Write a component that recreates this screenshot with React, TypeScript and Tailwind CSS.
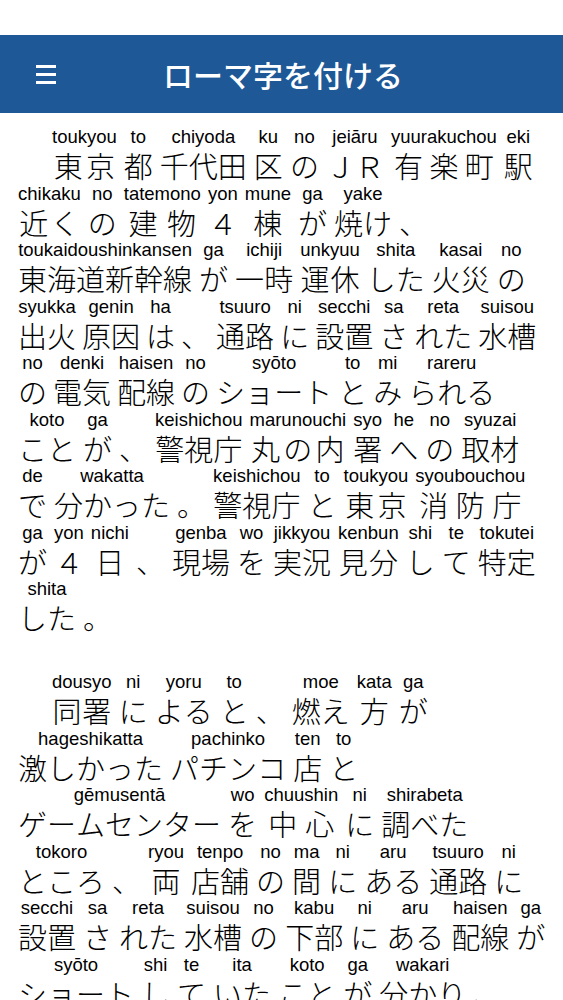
import React from "react";

type U = [string, string];
type Line = { gap?: string; units: U[] };

const P1: Line[] = [
  { units: [["東京", "toukyou"], ["都", "to"], ["千代田", "chiyoda"], ["区", "ku"], ["の", "no"], ["ＪＲ", "jeiāru"], ["有楽町", "yuurakuchou"], ["駅", "eki"]] },
  { units: [["近く", "chikaku"], ["の", "no"], ["建物", "tatemono"], ["４", "yon"], ["棟", "mune"], ["が", "ga"], ["焼け", "yake"], ["、", ""]] },
  { units: [["東海道新幹線", "toukaidoushinkansen"], ["が", "ga"], ["一時", "ichiji"], ["運休", "unkyuu"], ["した", "shita"], ["火災", "kasai"], ["の", "no"]] },
  { gap: "gap-x-[6px]", units: [["出火", "syukka"], ["原因", "genin"], ["は", "ha"], ["、", ""], ["通路", "tsuuro"], ["に", "ni"], ["設置", "secchi"], ["さ", "sa"], ["れた", "reta"], ["水槽", "suisou"]] },
  { gap: "gap-x-[6px]", units: [["の", "no"], ["電気", "denki"], ["配線", "haisen"], ["の", "no"], ["ショート", "syōto"], ["と", "to"], ["み", "mi"], ["られる", "rareru"]] },
  { units: [["こと", "koto"], ["が", "ga"], ["、", ""], ["警視庁", "keishichou"], ["丸の内", "marunouchi"], ["署", "syo"], ["へ", "he"], ["の", "no"], ["取材", "syuzai"]] },
  { units: [["で", "de"], ["分かった", "wakatta"], ["。", ""], ["警視庁", "keishichou"], ["と", "to"], ["東京", "toukyou"], ["消防庁", "syoubouchou"]] },
  { units: [["が", "ga"], ["４", "yon"], ["日", "nichi"], ["、", ""], ["現場", "genba"], ["を", "wo"], ["実況", "jikkyou"], ["見分", "kenbun"], ["し", "shi"], ["て", "te"], ["特定", "tokutei"]] },
  { units: [["した", "shita"], ["。", ""]] },
];

const P2: Line[] = [
  { units: [["同署", "dousyo"], ["に", "ni"], ["よる", "yoru"], ["と", "to"], ["、", ""], ["燃え", "moe"], ["方", "kata"], ["が", "ga"]] },
  { units: [["激しかった", "hageshikatta"], ["パチンコ", "pachinko"], ["店", "ten"], ["と", "to"]] },
  { units: [["ゲームセンター", "gēmusentā"], ["を", "wo"], ["中心", "chuushin"], ["に", "ni"], ["調べた", "shirabeta"]] },
  { units: [["ところ", "tokoro"], ["、", ""], ["両", "ryou"], ["店舗", "tenpo"], ["の", "no"], ["間", "ma"], ["に", "ni"], ["ある", "aru"], ["通路", "tsuuro"], ["に", "ni"]] },
  { units: [["設置", "secchi"], ["さ", "sa"], ["れた", "reta"], ["水槽", "suisou"], ["の", "no"], ["下部", "kabu"], ["に", "ni"], ["ある", "aru"], ["配線", "haisen"], ["が", "ga"]] },
  { units: [["ショート", "syōto"], ["し", "shi"], ["て", "te"], ["いた", "ita"], ["こと", "koto"], ["が", "ga"], ["分かり", "wakari"], ["、", ""]] },
];

function Unit({ base, rt }: { base: string; rt: string }) {
  return (
    <div className="flex flex-col">
      <div className="text-center whitespace-nowrap text-[18.5px] leading-[20px] font-['Liberation_Sans',Arial,sans-serif]">
        {rt || "\u00a0"}
      </div>
      <div className="flex justify-around text-[29px] leading-[36.5px] font-light">
        {Array.from(base).map((c, i) => (
          <span key={i}>{c}</span>
        ))}
      </div>
    </div>
  );
}

function Paragraph({ lines }: { lines: Line[] }) {
  return (
    <div className="flex flex-col">
      {lines.map((line, i) => (
        <div key={i} className={`flex ${line.gap ?? "gap-x-[7px]"} ${i === 0 ? "pl-[34px]" : ""}`}>
          {line.units.map(([b, r], j) => (
            <Unit key={j} base={b} rt={r} />
          ))}
        </div>
      ))}
    </div>
  );
}

export default function App() {
  return (
    <div className="min-h-screen bg-white text-black font-['Noto_Sans_CJK_JP',sans-serif]">
      <div className="h-[35px] bg-white" />
      <header className="h-[78px] bg-[#1e5896] flex items-center">
        <div className="ml-[36px] flex flex-col gap-[5px]">
          <span className="block w-[20px] h-[3px] bg-white" />
          <span className="block w-[20px] h-[3px] bg-white" />
          <span className="block w-[20px] h-[3px] bg-white" />
        </div>
        <h1 className="ml-[107px] text-white text-[30px] leading-none font-medium">ローマ字を付ける</h1>
      </header>
      <main className="px-[18px] pt-[14px]">
        <Paragraph lines={P1} />
        <div className="h-[36.5px]" />
        <Paragraph lines={P2} />
      </main>
    </div>
  );
}
